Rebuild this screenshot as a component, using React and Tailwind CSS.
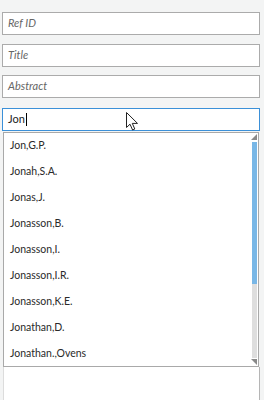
import React from 'react';

const names = [
  'Jon,G.P.',
  'Jonah,S.A.',
  'Jonas,J.',
  'Jonasson,B.',
  'Jonasson,I.',
  'Jonasson,I.R.',
  'Jonasson,K.E.',
  'Jonathan,D.',
  'Jonathan.,Ovens',
];

function Field({ label, className }) {
  return (
    <div
      className={`h-[23px] border border-[#ababab] bg-white pl-[5px] flex items-center italic text-[11px] text-[#666] ${className}`}
    >
      {label}
    </div>
  );
}

export default function App() {
  return (
    <div
      className="relative w-[264px] h-[400px] overflow-hidden bg-[#f3f4f4] pt-[12px] pl-[2px] pr-[4px] flex flex-col"
      style={{ fontFamily: 'Lato, "Open Sans", sans-serif' }}
    >
      <Field label="Ref ID" />
      <Field label="Title" className="mt-[9px]" />
      <Field label="Abstract" className="mt-[8px]" />

      {/* focused search box */}
      <div className="mt-[10px] h-[23px] border border-[#3b90d8] bg-white pl-[5px] flex items-center text-[11px] text-[#222]">
        <span>Jon</span>
        <span className="ml-[1px] w-px h-[13px] bg-black" />
      </div>

      {/* autocomplete list */}
      <div className="ml-[1px] mr-[1px] mt-[1px] h-[235px] border border-[#a9a9a9] bg-white flex">
        <div className="flex-1 flex flex-col overflow-hidden">
          {names.map((n) => (
            <div key={n} className="h-[26px] shrink-0 flex items-center pl-[6px] pb-[1px] text-[10.5px] text-[#2a2a2a]">
              {n}
            </div>
          ))}
        </div>
        <div className="w-[6px] mr-[1px] flex flex-col items-center pt-[1px] pb-[1px]">
          <svg width="6" height="6" viewBox="0 0 6 6">
            <path d="M6 0 L6 6 L0 6 Z" fill="#8a8a8a" />
          </svg>
          <div className="w-[5px] mt-[2px] h-[142px] bg-[#79b7e6]" />
          <div className="w-[5px] flex-1 bg-[#dedede]" />
          <svg width="6" height="6" viewBox="0 0 6 6" className="mt-[1px]">
            <path d="M0 0 L6 0 L6 6 Z" fill="#8a8a8a" />
          </svg>
        </div>
      </div>

      {/* panel underneath */}
      <div className="ml-[1px] flex-1 bg-white border-r border-l border-[#dcdcdc] border-r-[#b5b5b5]" />

      {/* mouse pointer */}
      <svg className="absolute left-[126px] top-[112px]" width="13" height="19" viewBox="0 0 13 19">
        <path
          d="M0.5 0.5 L0.5 15.5 L4 12.2 L6.6 18 L8.8 17 L6.3 11.4 L11.5 11.4 Z"
          fill="white"
          stroke="#222"
          strokeWidth="1"
          strokeLinejoin="round"
        />
      </svg>
    </div>
  );
}
